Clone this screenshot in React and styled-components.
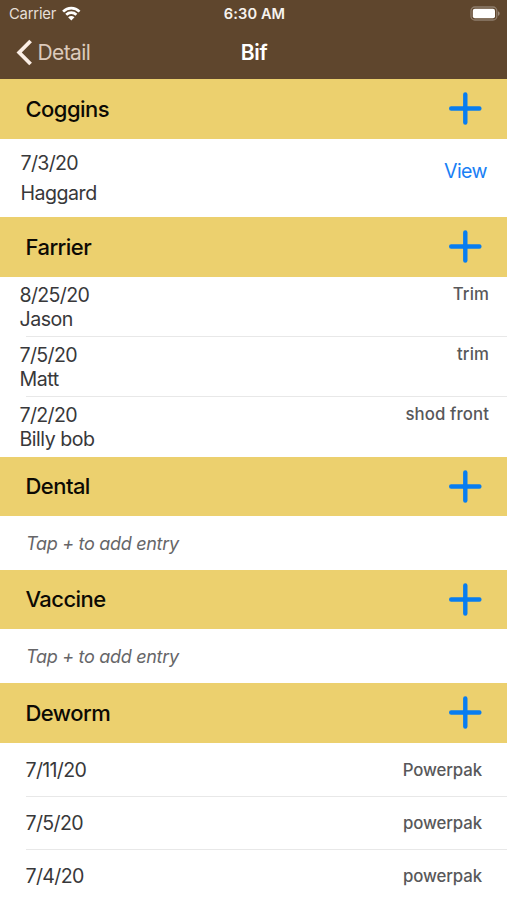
import React from 'react';
import styled, {createGlobalStyle} from 'styled-components';

const GlobalStyle = createGlobalStyle`
  * {
    box-sizing: border-box;
  }

  body {
    margin: 0;
    background: #ffffff;
    font-family: Inter, "Liberation Sans", sans-serif;
    overflow: hidden;
  }
`;

const Screen = styled.div`
  width: 507px;
  height: 900px;
  overflow: hidden;
  background: #ffffff;
`;

const Top = styled.header`
  height: 79px;
  background: #5f462d;
  color: #ffffff;
`;

const Columns = styled.div`
  display: grid;
  grid-template-columns: 1fr auto 1fr;
  align-items: center;
`;

const StatusBar = styled(Columns)`
  height: 27px;
  padding: 0 7px 0 9px;
  line-height: 25px;
`;

const Carrier = styled.div`
  display: flex;
  align-items: center;
  gap: 6px;
  padding-top: 1px;
  color: #e6dfd8;
  font-size: 14.8px;
  letter-spacing: -0.2px;

  svg {
    margin-top: -2px;
  }
`;

const Time = styled.div`
  padding-top: 2px;
  font-weight: 600;
  font-size: 14.6px;
  letter-spacing: 0.1px;
  color: #f7f3ef;
`;

const Battery = styled.svg`
  justify-self: end;
`;

const NavBar = styled(Columns)`
  height: 50px;
  padding: 0 15px 0 16px;
`;

const Back = styled.div`
  display: flex;
  align-items: center;
  gap: 4.5px;
  font-size: 21px;
  letter-spacing: -0.6px;
  color: #dccabb;
`;

const Title = styled.div`
  font-size: 21px;
  font-weight: 600;
  letter-spacing: -0.4px;
`;

const SectionHead = styled.div`
  display: flex;
  align-items: center;
  justify-content: space-between;
  height: ${(props) => props.$h}px;
  padding: 0 25px 1px 25.5px;
  background: #ecd06e;
  color: #0c0a04;
  font-size: 22px;
  font-weight: 500;
  letter-spacing: -0.55px;

  svg {
    display: block;
  }
`;

const Row = styled.div`
  display: flex;
  align-items: flex-start;
  justify-content: space-between;
  color: #38383a;
  font-size: 19.6px;
  letter-spacing: -0.5px;
`;

const DateText = styled.div`
  letter-spacing: -0.68px;
`;

const CogginsRow = styled(Row)`
  height: 78px;
  padding: 9px 20px 0 20.5px;
  line-height: 30px;
`;

const View = styled.div`
  padding-top: 8px;
  color: #1a80f5;
  letter-spacing: -0.6px;
`;

const FarrierRow = styled(Row)`
  height: 60px;
  padding: 6px 18px 0 19.5px;
  line-height: 24px;
`;

const DewormRow = styled(Row)`
  height: 53px;
  align-items: center;
  padding: 1px 25px 0 25.5px;
`;

const Divider = styled.div`
  height: 1px;
  margin: ${(props) => (props.$raised ? '-1px 0 0 26px' : '0 0 -1px 26px')};
  background: #e8e8e8;
`;

const Note = styled.div`
  color: #58585a;
  font-size: 16.8px;
  font-weight: 500;
  letter-spacing: ${(props) => props.$track}px;
  margin-top: ${(props) => props.$up || 0}px;
`;

const Empty = styled.div`
  display: flex;
  align-items: center;
  height: 54px;
  padding: 1px 26px 0;
  color: #666668;
  font-size: 18px;
  font-style: italic;
  letter-spacing: -0.3px;
`;

const farrier = [
  {date: '8/25/20', name: 'Jason', note: 'Trim'},
  {date: '7/5/20', name: 'Matt', note: 'trim'},
  {date: '7/2/20', name: 'Billy bob', note: 'shod front'},
];

const deworm = [
  {date: '7/11/20', note: 'Powerpak'},
  {date: '7/5/20', note: 'powerpak'},
  {date: '7/4/20', note: 'powerpak'},
];

function Section({title, h = 60, children}) {
  return (
      <section>
        <SectionHead $h={h}>
          <span>{title}</span>
          <svg width="33" height="33" viewBox="0 0 33 33" fill="none" stroke="#087df0" strokeWidth="4.4" strokeLinecap="round">
            <path d="M16.3 2.4V30.6M2.2 16.5H30.4"/>
          </svg>
        </SectionHead>
        {children}
      </section>
  );
}

function App() {
  return (
      <Screen>
        <GlobalStyle/>
        <Top>
          <StatusBar>
            <Carrier>
              Carrier
              <svg width="19" height="15" viewBox="0 0 19 15" fill="none" stroke="#ffffff" strokeWidth="2.7">
                <path d="M1.1 5.6C5.7.9 12.9.9 17.5 5.6"/>
                <path d="M4.2 8.8C7.1 6 11.5 6 14.4 8.8"/>
                <path d="M9.3 14.4L6.1 11.2C8 9.5 10.6 9.5 12.5 11.2Z" fill="#ffffff" stroke="none"/>
              </svg>
            </Carrier>
            <Time>6:30 AM</Time>
            <Battery width="31" height="15" viewBox="0 0 31 15">
              <rect x="2" y="1" width="25.8" height="13" rx="3.8" fill="none" stroke="#8f7d6c" strokeWidth="1.3"/>
              <rect x="3.8" y="2.8" width="22.2" height="9.4" rx="2" fill="#ffffff"/>
              <path d="M29 5.2C31.2 6.1 31.2 8.9 29 9.8Z" fill="#9c8b7b"/>
            </Battery>
          </StatusBar>
          <NavBar>
            <Back>
              <svg width="17" height="27" viewBox="0 0 17 27" fill="none" stroke="#fbeee5" strokeWidth="3.8">
                <path d="M14.6 2L3.2 13.5L14.6 25"/>
              </svg>
              Detail
            </Back>
            <Title>Bif</Title>
          </NavBar>
        </Top>

        <Section title="Coggins">
          <CogginsRow>
            <div>
              <DateText>7/3/20</DateText>
              <div>Haggard</div>
            </div>
            <View>View</View>
          </CogginsRow>
        </Section>

        <Section title="Farrier">
          {farrier.map((i, index) => (
              <React.Fragment key={i.date}>
                {index > 0 && <Divider $raised/>}
                <FarrierRow>
                  <div>
                    <DateText>{i.date}</DateText>
                    <div>{i.name}</div>
                  </div>
                  <Note $up={-1} $track={0.1}>{i.note}</Note>
                </FarrierRow>
              </React.Fragment>
          ))}
        </Section>

        <Section title="Dental" h={59}>
          <Empty>Tap + to add entry</Empty>
        </Section>

        <Section title="Vaccine" h={59}>
          <Empty>Tap + to add entry</Empty>
        </Section>

        <Section title="Deworm">
          {deworm.map((i, index) => (
              <React.Fragment key={i.date}>
                {index > 0 && <Divider/>}
                <DewormRow>
                  <DateText>{i.date}</DateText>
                  <Note $track={-0.1}>{i.note}</Note>
                </DewormRow>
              </React.Fragment>
          ))}
        </Section>
      </Screen>
  );
}

export default App;
